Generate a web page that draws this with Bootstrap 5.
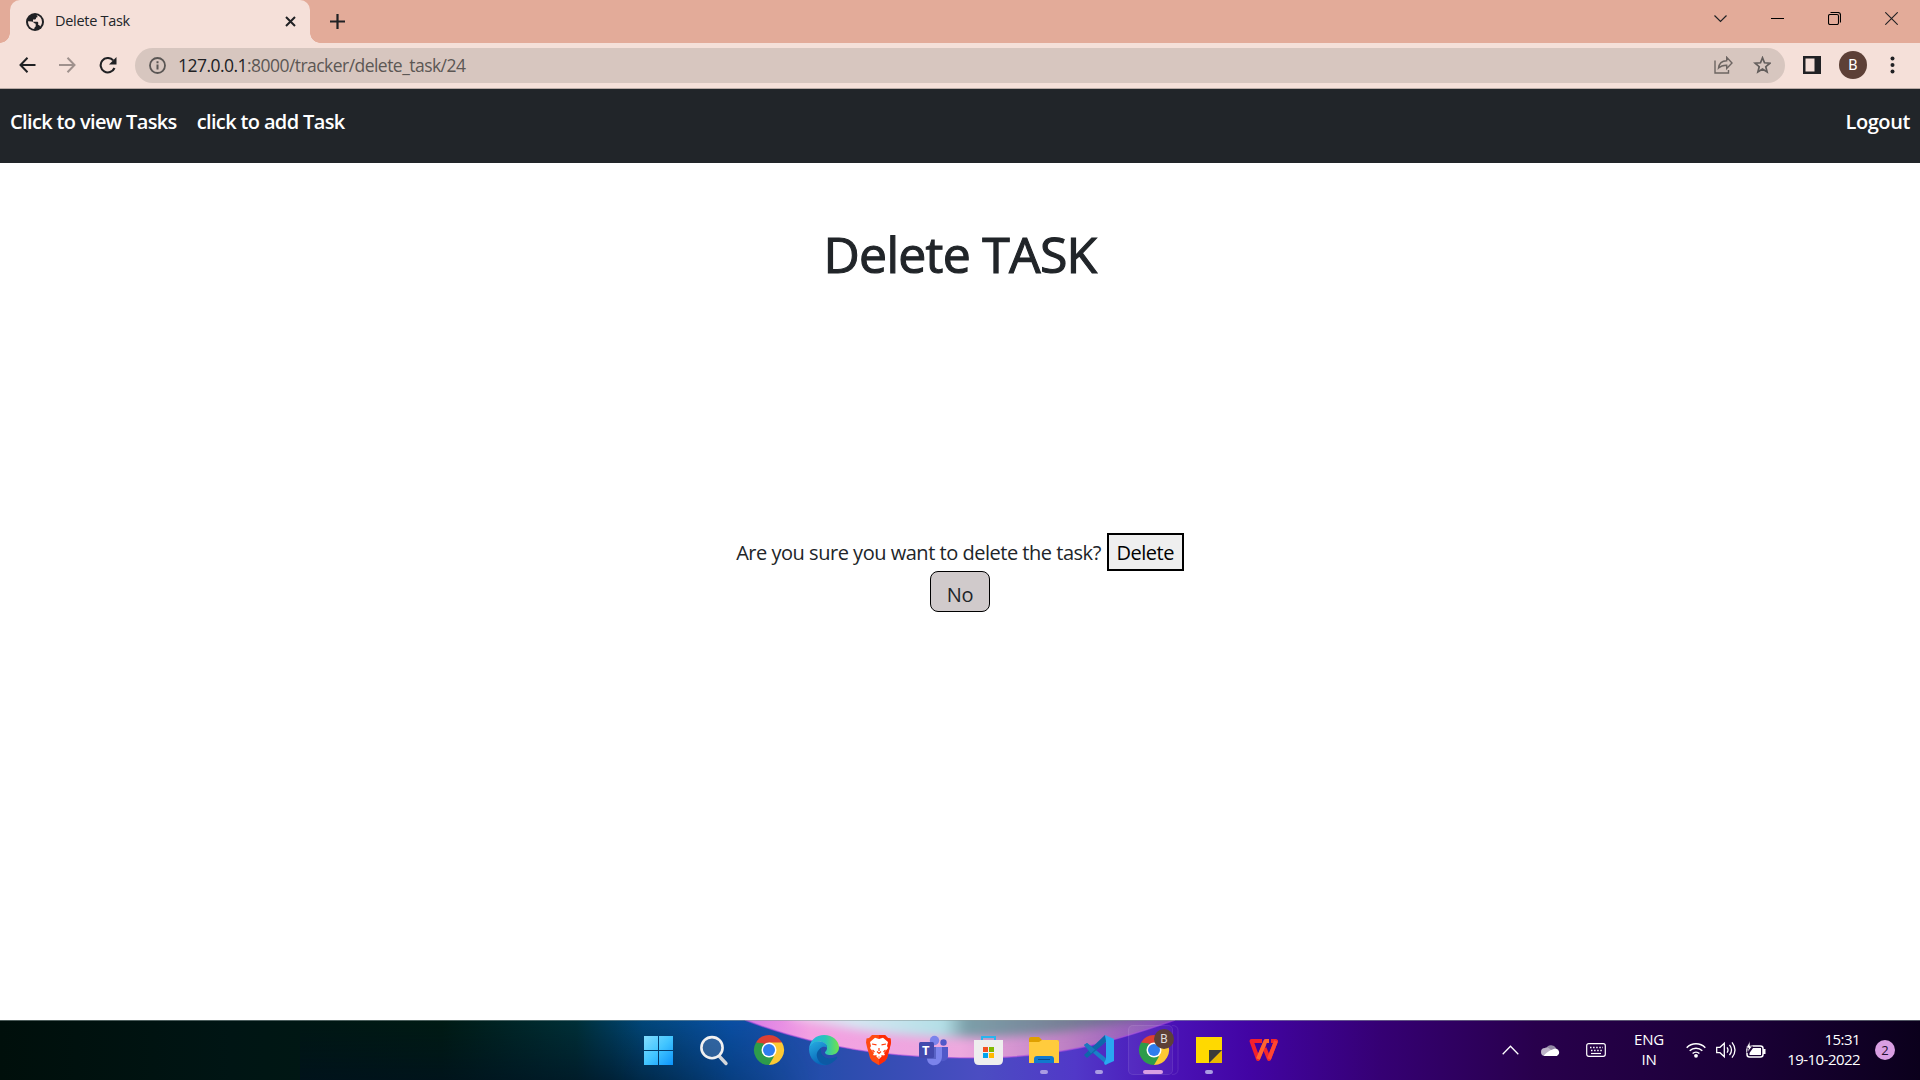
<!DOCTYPE html>
<html lang="en">
<head>
<meta charset="utf-8">
<title>Delete Task</title>
<link href="https://cdn.jsdelivr.net/npm/bootstrap@5.3.0/dist/css/bootstrap.min.css" rel="stylesheet">
<style>
  body { font-family: "Open Sans", "Noto Sans", sans-serif; font-size: 20px; line-height: 30px; width: 1920px; height: 1080px; overflow: hidden; color: #212529; }
  svg { display: block; flex: none; }
  .txt { white-space: nowrap; }
  .tabstrip { height: 43px; background: #e3ab99; }
  .tab { width: 300px; height: 43px; margin-left: 10px; background: #f5e0d9; border-radius: 10px 10px 0 0; padding: 0 14px 0 16px; position: relative; }
  .tab::before, .tab::after { content: ""; position: absolute; bottom: 0; width: 10px; height: 10px; }
  .tab::before { left: -10px; background: radial-gradient(circle at 0 0, transparent 9.5px, #f5e0d9 10px); }
  .tab::after { right: -10px; background: radial-gradient(circle at 100% 0, transparent 9.5px, #f5e0d9 10px); }
  .tab-title { font-size: 14.5px; letter-spacing: -.3px; margin: -2px 0 0 11px; line-height: 20px; }
  .new-tab { margin: 14px 0 0 20px; }
  .win-controls { padding: 12px 22px 0 0; gap: 44px; }
  .toolbar { height: 46px; background: #f5e0d9; border-bottom: 1px solid #b8aaa5; padding: 0 21px 1px 19px; }
  .omnibox { width: 1650px; height: 35px; margin-left: 18px; background: #d7c6bf; border-radius: 18px; padding: 0 14px; }
  .url { font-size: 17.5px; letter-spacing: -.54px; margin-left: 12px; color: #5c5754; }
  .url b { font-weight: 400; color: #202124; }
  .avatar { width: 28px; height: 28px; border-radius: 50%; background: #5d4037; color: #fff; font: 15px/28px Roboto, sans-serif; text-align: center; }
  .site-nav { height: 74px; background: #212529; padding: 18px 10px 0; }
  .site-nav a { color: #fff; font-weight: 600; text-decoration: none; line-height: 30px; letter-spacing: -.64px; }
  .site-nav a + a { margin-left: 20px; }
  .site-nav a.ms-auto { letter-spacing: -.4px; }
  .page { height: 857px; padding-top: 61px; }
  .page h1 { font-size: 50px; line-height: 60px; font-weight: 400; letter-spacing: -.75px; margin: 0; -webkit-text-stroke: 1.1px #212529; }
  .question { margin-top: 249px; height: 38px; }
  .question .ask { letter-spacing: -.48px; padding-top: 2px; }
  .btn-del { width: 77px; height: 38px; margin-left: 6px; padding: 1px 0 0; border: 2px solid #000; background: #efefef; color: #000; letter-spacing: -.5px; line-height: 33px; }
  .btn-no { width: 60px; height: 41px; border: 1px solid #000; border-radius: 8px; background: #d0cacb; color: #212529; text-decoration: none; padding-top: 8px; line-height: 30px; text-align: center; letter-spacing: -.3px; }
  .taskbar { height: 60px; position: relative; overflow: hidden; background: #130028; }
  .wallpaper { position: absolute; inset: 0; }
  .dock { margin-left: 631px; height: 60px; position: relative; }
  .app { width: 55px; height: 60px; position: relative; }
  .app.run::after { content: ""; position: absolute; left: 24px; bottom: 6px; width: 8px; height: 4px; border-radius: 2px; background: #aa9ce3; }
  .app.now::after { left: 17px; width: 20px; background: #d99ee3; }
  .app.now::before { content: ""; position: absolute; left: 2px; top: 5px; width: 45px; height: 50px; border-radius: 5px; border: 1px solid #ffffff16; background: #ffffff0c; }
  .app svg { position: relative; }
  .mini { position: absolute; left: 28px; top: 9px; width: 20px; height: 20px; border-radius: 50%; background: #5d4037; color: #ddd; font: 12px/20px Roboto, sans-serif; text-align: center; }
  .teams-t { position: absolute; left: 16px; top: 20px; font: bold 13px/20px "Open Sans", sans-serif; color: #fff; }
  .tray { position: relative; height: 60px; margin-left: auto; padding-right: 25px; color: #fff; font-size: 15px; line-height: 20px; }
  .lang { width: 30px; margin: -2px 0 0 28px; letter-spacing: -.2px; text-align: center; }
  .clock { width: 84px; margin: -2px 0 0 10px; letter-spacing: -.55px; text-align: right; }
  .count { width: 20px; height: 20px; border-radius: 50%; margin-left: 15px; background: #d99ee2; color: #24102e; font-size: 13px; text-align: center; }
</style>
<script src="https://cdn.jsdelivr.net/npm/bootstrap@5.3.0/dist/js/bootstrap.bundle.min.js"></script>
</head>
<body class="d-flex flex-column bg-white">

<div class="tabstrip d-flex">
  <div class="tab d-flex align-items-center">
    <svg width="18" height="18" viewBox="0 0 18 18"><circle cx="9" cy="9" r="9" fill="#202124"/><path d="M2 8.200 5.500 8.500c2 0 2.200 2.200 4.200 2.200V13c0 1.200-1.500 1-1.500 3C4.500 15.700 2 12.500 2 8.200ZM10.500 2.100C14 2.900 16 5.500 16 9c0 1.700-.8 3.200-1.800 4.400-.4-1-1-1.500-2-1.500V9.600c0-.6-.5-.9-1.200-.9H7V6.500h2c.7 0 1-.5 1-1.200V4.500h1c.7 0 .8-1-.5-2.400Z" fill="#f5e0d9"/></svg>
    <span class="tab-title txt">Delete Task</span>
    <svg class="ms-auto" width="11" height="11" viewBox="0 0 11 11"><path d="m1 1 9 9m0-9-9 9" stroke="#202124" stroke-width="2"/></svg>
  </div>
  <svg class="new-tab" width="15" height="15" viewBox="0 0 15 15"><path d="M7.500 0v15M0 7.500h15" stroke="#202124" stroke-width="2.200"/></svg>
  <div class="win-controls d-flex ms-auto">
    <svg width="13" height="13" viewBox="0 0 13 13"><path d="m.5 3.500 6 6 6-6" fill="none" stroke="#202124" stroke-width="1.200"/></svg>
    <svg width="13" height="13" viewBox="0 0 13 13"><path d="M0 6.500h13" stroke="#000"/></svg>
    <svg width="13" height="13" viewBox="0 0 13 13"><g fill="none" stroke="#000" stroke-width="1.100"><rect x=".5" y="2.500" width="10" height="10" rx="1.500"/><path d="M2.500.5H10A2.500 2.500 0 0 1 12.500 3v7.500"/></g></svg>
    <svg width="13" height="13" viewBox="0 0 13 13"><path d="m.3.3 12.400 12.400m0-12.400L.3 12.700" stroke="#202124" stroke-width="1.100"/></svg>
  </div>
</div>

<div class="toolbar d-flex align-items-center">
  <svg width="17" height="16" viewBox="0 0 17 16"><path d="M16.500 8H2M8.500.8 1.500 8l7 7.200" fill="none" stroke="#202124" stroke-width="2"/></svg>
  <svg style="margin-left:23px" width="17" height="16" viewBox="0 0 17 16"><path d="M0 8h15M8.500.8l7 7.200-7 7.200" fill="none" stroke="#9f918d" stroke-width="2"/></svg>
  <svg style="margin-left:23px" width="18" height="17" viewBox="0 0 18 17"><path d="M14.200 3.400A7.200 7.200 0 1 0 15.500 11" fill="none" stroke="#202124" stroke-width="2.100"/><path d="M17.500 0v7.500H10Z" fill="#202124"/></svg>
  <div class="omnibox d-flex align-items-center">
    <svg width="17" height="17" viewBox="0 0 17 17"><circle cx="8.500" cy="8.500" r="7.500" fill="none" stroke="#5a5654" stroke-width="1.800"/><path d="M8.500 7.500v5M8.500 4.300v2" stroke="#5a5654" stroke-width="2"/></svg>
    <span class="url txt"><b>127.0.0.1</b>:8000/tracker/delete_task/24</span>
    <svg class="ms-auto" width="20" height="18" viewBox="0 0 20 18"><g fill="none" stroke="#6d6562" stroke-width="1.400"><path d="M2 4.500V17h13.500v-3"/><path d="M5.500 12c.6-4.600 3.500-7 8.200-7.200V1.300L19 7l-5.300 5.600V9.200c-3.500-.1-6 .7-8.200 2.800Z"/></g></svg>
    <svg style="margin-left:20px" width="18" height="18" viewBox="0 0 18 18"><path d="m9.500 1.800 2 5 5.400.4-4.100 3.500 1.300 5.300-4.600-2.900L4.900 16l1.300-5.300-4.100-3.500 5.400-.4Z" fill="none" stroke="#625d5b" stroke-width="1.700"/></svg>
  </div>
  <svg style="margin-left:18px;margin-right:1px" width="18" height="18" viewBox="0 0 18 18"><path fill="#202124" fill-rule="evenodd" d="M0 0h18v18H0ZM2.500 2.500v13h9v-13Z"/></svg>
  <div class="avatar" style="margin-left:17px">B</div>
  <svg style="margin-left:23px" width="5" height="18" viewBox="0 0 5 18"><g fill="#202124"><circle cx="2.500" cy="2.500" r="2"/><circle cx="2.500" cy="9" r="2"/><circle cx="2.500" cy="15.500" r="2"/></g></svg>
</div>

<nav class="site-nav d-flex align-items-start">
  <a class="txt" href="#">Click to view Tasks</a>
  <a class="txt" href="#">click to add Task</a>
  <a class="txt ms-auto" href="#">Logout</a>
</nav>

<main class="page d-flex flex-column align-items-center">
  <h1 class="txt">Delete TASK</h1>
  <div class="question d-flex align-items-center justify-content-center">
    <span class="ask txt">Are you sure you want to delete the task?</span>
    <button class="btn-del">Delete</button>
  </div>
  <a class="btn-no" href="#">No</a>
</main>

<footer class="taskbar d-flex">
  <svg class="wallpaper" width="1920" height="60" viewBox="0 0 1920 60">
    <defs>
      <linearGradient id="wp"><stop offset="0" stop-color="#000f0b"/><stop offset=".12" stop-color="#001514"/><stop offset=".23" stop-color="#001b14"/><stop offset=".3" stop-color="#003038"/><stop offset=".335" stop-color="#02477a"/><stop offset=".38" stop-color="#0a4fa3"/><stop offset=".44" stop-color="#2c4dae"/><stop offset=".51" stop-color="#4b4dc2"/><stop offset=".56" stop-color="#5138c8"/><stop offset=".61" stop-color="#4a12b6"/><stop offset=".65" stop-color="#4204a4"/><stop offset=".72" stop-color="#350073"/><stop offset=".8" stop-color="#28004c"/><stop offset=".91" stop-color="#1a0036"/><stop offset="1" stop-color="#0b001c"/></linearGradient>
      <linearGradient id="pk" gradientUnits="userSpaceOnUse" x1="745" x2="1175" y1="0" y2="0"><stop offset="0" stop-color="#d879e6"/><stop offset=".15" stop-color="#f3a0e2"/><stop offset=".5" stop-color="#eda9de"/><stop offset=".75" stop-color="#bd80c4"/><stop offset="1" stop-color="#7d49b5"/></linearGradient>
      <linearGradient id="skyc" gradientUnits="userSpaceOnUse" x1="780" x2="1160" y1="0" y2="0"><stop offset="0" stop-color="#f3c8ea"/><stop offset=".2" stop-color="#d5e6f2"/><stop offset=".43" stop-color="#b3dfe6"/><stop offset=".49" stop-color="#7c9fa9"/><stop offset=".75" stop-color="#777f96"/><stop offset="1" stop-color="#72569a"/></linearGradient>
      <filter id="soft" x="-5%" y="-60%" width="110%" height="220%"><feGaussianBlur stdDeviation="5"/></filter>
      <clipPath id="lens"><path d="M745 0C820 29 892 38 975 38S1112 22 1175 0Z"/></clipPath>
      <linearGradient id="dk" x2="0" y2="1"><stop offset="0" stop-color="#001020" stop-opacity="0"/><stop offset="1" stop-color="#001020" stop-opacity=".6"/></linearGradient>
      <linearGradient id="dkx"><stop offset="0" stop-color="#fff"/><stop offset=".6" stop-color="#fff"/><stop offset="1" stop-color="#000"/></linearGradient>
      <mask id="fade"><rect x="300" width="520" height="60" fill="url(#dkx)"/></mask>
    </defs>
    <rect width="1920" height="60" fill="url(#wp)"/>
    <rect x="300" width="520" height="60" fill="url(#dk)" mask="url(#fade)"/>
    <g clip-path="url(#lens)">
      <rect x="745" width="430" height="40" fill="url(#pk)"/>
      <path d="M790-15V-2C850 10 900 17 965 17S1090 10 1150-2V-15Z" fill="url(#skyc)" filter="url(#soft)"/>
    </g>
    <path d="M745 0C820 29 892 38 975 38S1112 22 1175 0" fill="none" stroke="#a94be0" stroke-opacity=".6" stroke-width="1.500"/>
    <path d="M0 .5h1920" stroke="#8b9a9a" stroke-opacity=".55"/>
  </svg>

  <div class="dock d-flex">
    <div class="app"><svg width="55" height="60" viewBox="0 0 55 60"><defs><linearGradient id="wb" gradientUnits="userSpaceOnUse" x1="13" y1="16" x2="42" y2="45"><stop offset="0" stop-color="#83ddfc"/><stop offset=".5" stop-color="#42c5ff"/><stop offset="1" stop-color="#0c94fb"/></linearGradient></defs><path fill="url(#wb)" d="M13 16h14v14H13Zm15 0h14v14H28ZM13 31h14v14H13Zm15 0h14v14H28Z"/></svg></div>

    <div class="app"><svg width="55" height="60" viewBox="0 0 55 60"><path d="m33.500 36.500 6.500 7" stroke="#d2d6db" stroke-width="3.400" stroke-linecap="round"/><circle cx="26" cy="27.700" r="10.600" fill="#6b8fb8" fill-opacity=".4" stroke="#f1f1f1" stroke-width="2.600"/></svg></div>

    <div class="app"><svg width="55" height="60" viewBox="0 0 55 60"><g id="chrome"><path d="M28 30 15 22.500A15 15 0 0 1 41 22.500Z" fill="#dd4033"/><path d="M28 30 41 22.500A15 15 0 0 1 28 45Z" fill="#fcc934"/><path d="M28 30v15a15 15 0 0 1-13-22.500Z" fill="#2d9c4b"/><path d="M28 22.500h13L34.500 34Z" fill="#fcc934"/><path d="m21.500 33.700-6.500-11.200 8 1Z" fill="#2d9c4b"/><path d="m21.500 33.700 6.500 11.300 1.500-2.500 3.500-6Z" fill="#2d9c4b"/><circle cx="28" cy="30" r="7.500" fill="#fff"/><circle cx="28" cy="30" r="6" fill="#2e7def"/></g></svg></div>

    <div class="app"><svg width="55" height="60" viewBox="0 0 55 60"><defs><linearGradient id="e1"><stop offset="0" stop-color="#28aee8"/><stop offset=".55" stop-color="#29c5b9"/><stop offset="1" stop-color="#70e34a"/></linearGradient><linearGradient id="e2" x2=".4" y2="1"><stop offset="0" stop-color="#27aee2"/><stop offset="1" stop-color="#0866b8"/></linearGradient></defs><path d="M13 29C14 20 20 15 28 15c9 0 15 6 15 12.500 0 5-4 7.500-8.500 7.500-4 0-5.500-1.500-5.500-2.500s2-1.500 2-4.500C31 23 26 21 21 22c-4 1-7 4-8 7Z" fill="url(#e1)"/><path d="M13 29c1-4 5-7.500 10-7.500 5 0 8 3 8 6-5-2-8 1-8 5C23 40 31 45 31 45c-10 1.500-18-6-18-16Z" fill="url(#e2)"/><path d="M25 28c-3 2-5 5-4 9 1 5 6 8 10 8 4-1 8-4 10-7 .5-1 0-1.500-1-1-6 3-14 1-15-5-.2-1.500-.1-3 0-4Z" fill="#0c59a4"/></svg></div>

    <div class="app"><svg width="55" height="60" viewBox="0 0 55 60"><path d="m21 15-3 3-2.500.5-.5 4 1 4.500 3 11 2 3 6.500 4 6.500-4 2-3 3-11 1-4.500-.5-4L37 18l-3-3Z" fill="#ff4a12"/><path d="M28 15h6l3 3 2.500.5.5 4-1 4.500-3 11-2 3-6 4Z" fill="#ff2a06"/><path d="m28 19-4-1.200-5 4.200 1 4-1 2 4 5-1 2 3 1 3 3 3-3 3-1-1-2 4-5-1-2 1-4-5-4.200Z" fill="#fff"/><path d="m21 24 4.500.8M35 24l-4.500.8M28 28v3m-2 .5 2 2 2-2m-7 5 2.500-1m5 0 2.500 1m-5 0v1M21.500 30l2 2m11-2-2 2" fill="none" stroke="#ff3c0c" stroke-width="1.200"/></svg></div>

    <div class="app"><svg width="55" height="60" viewBox="0 0 55 60"><circle cx="28.500" cy="20.500" r="4.700" fill="#7b83eb"/><circle cx="37.500" cy="22.500" r="3.200" fill="#5059c9"/><path d="M33 27h9v9c0 4-5 7-8 4Z" fill="#5059c9"/><path d="M21 27h15v9c0 12-15 12-15 2Z" fill="#7b83eb"/><path d="M19 27h11v12h-9Z" fill="#5962c5"/><rect x="13" y="22" width="15" height="16" rx="1.500" fill="#4349ad"/></svg><span class="teams-t">T</span></div>

    <div class="app"><svg width="55" height="60" viewBox="0 0 55 60"><path d="M21 22v-5h13v5" fill="none" stroke="#28b5ee" stroke-width="2"/><path d="M13 20h29v20q0 5-5 5H18q-5 0-5-5Z" fill="#eee"/><path fill="#f25022" d="M22 27h5v5h-5Z"/><path fill="#7fba00" d="M28 27h5v5h-5Z"/><path fill="#00a4ef" d="M22 33h5v5h-5Z"/><path fill="#ffb900" d="M28 33h5v5h-5Z"/></svg></div>

    <div class="app run"><svg width="55" height="60" viewBox="0 0 55 60"><path d="M13 22v-3q0-2 2-2h8l3 3h15q2 0 2 2Z" fill="#dfa000"/><path d="M13 22h10l3-2h15q2 0 2 2v21H13Z" fill="#ffcb3d"/><path d="M18 43v-4q0-3 3-3h14q3 0 3 3v4Z" fill="#1179cd"/><path d="M22 39.500h12" stroke="#084b8b"/></svg></div>

    <div class="app run"><svg width="55" height="60" viewBox="0 0 55 60"><path d="m13 25 3-2 20 16v6Z" fill="#1980c8"/><path d="m16 38-3-3 21-20 2 6Z" fill="#0e67aa"/><path d="m13 25 3-2 8 6.500-4 4Z" fill="#1a78bd"/><path d="m34 15 9 4v22l-9 4-1-2 2-4V21Z" fill="#2aa7f1"/></svg></div>

    <div class="app run now"><svg width="55" height="60" viewBox="0 0 55 60"><path d="M46 5.500q6 0 6 5v39q0 5-6 5" fill="none" stroke="#fff" stroke-opacity=".1"/><use href="#chrome"/></svg><span class="mini">B</span></div>

    <div class="app run"><svg width="55" height="60" viewBox="0 0 55 60"><path d="M15 17h26v13L28 43H15Z" fill="#ffd900"/><path d="M41 30v13H28Z" fill="#e9b800"/><path d="M28 30h13L28 43Z" fill="#3a3a3a"/></svg></div>

    <div class="app"><svg width="55" height="60" viewBox="0 0 55 60"><g fill="none" stroke-width="4" stroke-linejoin="round"><path d="M26 21H15.500l6.500 18 6.500-15" stroke="#f3202c"/><path d="m28.500 28 4.500 11 7-18h-5" stroke="#f3262c"/><path d="M22 39 29.500 21h3.500" stroke="#ff6430"/><path d="m33 39 7-18" stroke="#ff4630"/></g></svg></div>
  </div>

  <div class="tray d-flex align-items-center">
    <svg width="17" height="10" viewBox="0 0 17 10"><path d="m.7 9.300 7.800-8 7.800 8" fill="none" stroke="#fff" stroke-width="1.300"/></svg>
    <svg style="margin-left:22px" width="20" height="14" viewBox="0 0 20 14"><path d="M5 6a5.500 5.500 0 0 1 10-1l-3 5Z" fill="#948aa5"/><path d="M4 13a4 4 0 0 1 0-8c2-1 4 0 5 1l4 4-6 3Z" fill="#bdb4c8"/><path d="M3 13c0-2 8-7.500 12-7.500a4 4 0 0 1 1 7.500Z" fill="#fff"/></svg>
    <svg style="margin-left:25px" width="20" height="14" viewBox="0 0 20 14"><rect x=".7" y=".7" width="18.600" height="12.600" rx="2" fill="none" stroke="#fff" stroke-width="1.200"/><path d="M4 4.500h13M5 7.500h11" stroke="#fff" stroke-width="1.400" stroke-dasharray="1.500 1.600"/><path d="M5 10.500h10" stroke="#fff" stroke-width="1.200"/></svg>
    <div class="lang">ENG<br>IN</div>
    <svg style="margin-left:22px" width="20" height="16" viewBox="0 0 20 16"><g fill="none" stroke="#fff" stroke-width="1.500"><path d="M.7 5.700a13 13 0 0 1 18.600 0M3.700 8.700a9 9 0 0 1 12.600 0M6.600 11.500a5 5 0 0 1 6.800 0"/></g><circle cx="10" cy="13.800" r="1.900" fill="#fff"/></svg>
    <svg style="margin-left:10px" width="20" height="18" viewBox="0 0 20 18"><g fill="none" stroke="#fff" stroke-width="1.300"><path d="M.7 6.300H4l4.300-4v13.400l-4.300-4H.7ZM11 6.300q2 2.700 0 5.400M13.500 3.800q4 5.200 0 10.400M16 1.300q6 7.700 0 15.400"/></g></svg>
    <svg style="margin-left:10px" width="20" height="18" viewBox="0 0 20 18"><rect x="1" y="5" width="16" height="11" rx="2.500" fill="none" stroke="#fff" stroke-width="1.500"/><path d="M7 7h8v7H3.500v-2ZM17 8h2.500v5H17Z" fill="#fff"/><path d="M4 0 0 7h2.500L1 12l5.500-7H4Z" fill="#fff" stroke="#1c0035" stroke-width=".7"/></svg>
    <div class="clock txt">15:31<br>19-10-2022</div>
    <div class="count">2</div>
  </div>
</footer>
</body>
</html>
